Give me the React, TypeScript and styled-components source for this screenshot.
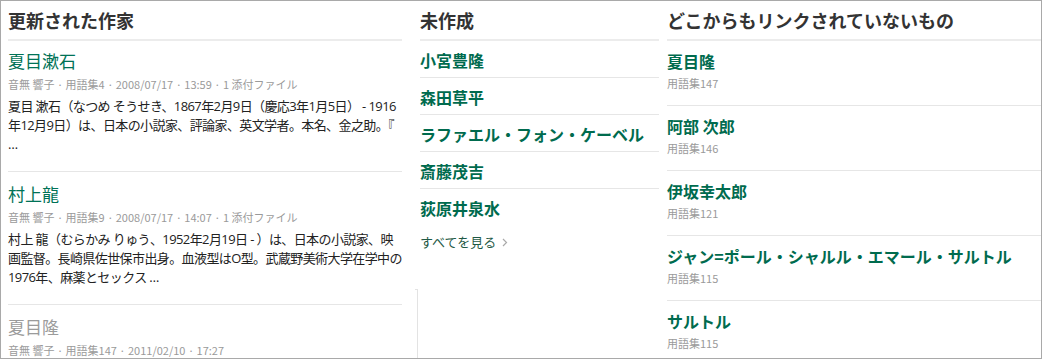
import React from "react";
import styled, { createGlobalStyle } from "styled-components";

type Update = {
  title: string;
  meta: string;
  body?: string;
  faded?: boolean;
};

type Orphan = {
  title: string;
  glossary: string;
};

const updates: Update[] = [
  {
    title: "夏目漱石",
    meta: "音無 響子 · 用語集4 · 2008/07/17 · 13:59 · 1 添付ファイル",
    body:
      "夏目 漱石（なつめ そうせき、1867年2月9日（慶応3年1月5日） - 1916年12月9日）は、日本の小説家、評論家、英文学者。本名、金之助。『 …",
  },
  {
    title: "村上龍",
    meta: "音無 響子 · 用語集9 · 2008/07/17 · 14:07 · 1 添付ファイル",
    body:
      "村上 龍（むらかみ りゅう、1952年2月19日 - ）は、日本の小説家、映画監督。長崎県佐世保市出身。血液型はO型。武蔵野美術大学在学中の1976年、麻薬とセックス …",
  },
  {
    title: "夏目隆",
    meta: "音無 響子 · 用語集147 · 2011/02/10 · 17:27",
    faded: true,
  },
];

const missing = ["小宮豊隆", "森田草平", "ラファエル・フォン・ケーベル", "斎藤茂吉", "荻原井泉水"];

const orphans: Orphan[] = [
  { title: "夏目隆", glossary: "用語集147" },
  { title: "阿部 次郎", glossary: "用語集146" },
  { title: "伊坂幸太郎", glossary: "用語集121" },
  { title: "ジャン=ポール・シャルル・エマール・サルトル", glossary: "用語集115" },
  { title: "サルトル", glossary: "用語集115" },
];

const GlobalStyle = createGlobalStyle`
  html, body {
    margin: 0;
    padding: 0;
    background: #fff;
  }
  body {
    font-family: "Noto Sans CJK JP", "Noto Sans", sans-serif;
    color: #222;
  }
`;

const Frame = styled.div`
  box-sizing: border-box;
  width: 1042px;
  height: 359px;
  overflow: hidden;
  border: 1px solid #a9a9a9;
  display: flex;
  align-items: stretch;
  padding-left: 7px;
`;

const Column = styled.section<{ $width?: number; $offset?: number }>`
  display: flex;
  flex-direction: column;
  min-width: 0;
  flex: ${(p) => (p.$width ? `0 0 ${p.$width}px` : "1 1 auto")};
  margin-left: ${(p) => p.$offset ?? 0}px;
`;

const Heading = styled.h2`
  margin: 0;
  padding-top: 6px;
  height: 40px;
  flex-shrink: 0;
  box-sizing: border-box;
  font-size: 18px;
  line-height: 26px;
  font-weight: 700;
  color: #333;
  border-bottom: 2px solid #ececec;
  white-space: nowrap;
`;

const UpdateItem = styled.article`
  padding: 8px 0 17px;
  border-bottom: 1px solid #e6e6e6;

  & + & {
    padding-top: 10px;
  }
`;

const UpdateTitle = styled.a<{ $faded?: boolean }>`
  display: block;
  font-size: 17px;
  line-height: 24px;
  font-weight: 400;
  color: ${(p) => (p.$faded ? "#9b9b9b" : "#007256")};
  text-decoration: none;
`;

const Meta = styled.div`
  margin-top: 3px;
  font-size: 11px;
  line-height: 16px;
  color: #9a9a9a;
  white-space: nowrap;
`;

const Body = styled.p`
  margin: 5px -3px 0 0;
  font-family: "Open Sans", "Noto Sans CJK JP", sans-serif;
  font-size: 13px;
  line-height: 19px;
  letter-spacing: -0.6px;
  color: #222;
`;

const MissingItem = styled.a<{ $last?: boolean }>`
  display: block;
  padding: 8px 0 6px;
  font-size: 16px;
  line-height: 22px;
  font-weight: 700;
  color: #006b4e;
  text-decoration: none;
  white-space: nowrap;
  border-bottom: ${(p) => (p.$last ? "none" : "1px solid #e6e6e6")};
`;

const SeeAll = styled.a`
  display: flex;
  align-items: center;
  gap: 6px;
  margin-top: 7px;
  font-size: 13px;
  line-height: 20px;
  color: #1f5a46;
  text-decoration: none;
`;

const Chevron = styled.svg`
  width: 6px;
  height: 9px;
  margin-top: 1px;
`;

const Trailing = styled.div`
  position: relative;
  flex: 1;
  margin-top: 37px;
  margin-left: -3px;
  border-left: 1px solid #e3e3e3;

  &::before {
    content: "";
    position: absolute;
    top: 0;
    left: -3px;
    width: 2px;
    height: 1px;
    background: #e3e3e3;
  }
`;

const OrphanItem = styled.article`
  padding: 9px 0 14px;
  border-bottom: 1px solid #e6e6e6;
`;

const OrphanTitle = styled.a`
  display: block;
  font-size: 16px;
  line-height: 22px;
  font-weight: 700;
  color: #006b4e;
  text-decoration: none;
  white-space: nowrap;
`;

export default function App() {
  return (
    <>
      <GlobalStyle />
      <Frame>
        <Column $width={394}>
          <Heading>更新された作家</Heading>
          {updates.map((u) => (
            <UpdateItem key={u.title + u.meta}>
              <UpdateTitle href="#" $faded={u.faded}>
                {u.title}
              </UpdateTitle>
              <Meta>{u.meta}</Meta>
              {u.body && <Body>{u.body}</Body>}
            </UpdateItem>
          ))}
        </Column>

        <Column $width={239} $offset={18}>
          <Heading>未作成</Heading>
          {missing.map((name, i) => (
            <MissingItem key={name} href="#" $last={i === missing.length - 1}>
              {name}
            </MissingItem>
          ))}
          <SeeAll href="#">
            すべてを見る
            <Chevron viewBox="0 0 6 9">
              <path d="M1 1l3.5 3.5L1 8" fill="none" stroke="#aaa" strokeWidth="1.2" />
            </Chevron>
          </SeeAll>
          <Trailing />
        </Column>

        <Column $offset={8}>
          <Heading>どこからもリンクされていないもの</Heading>
          {orphans.map((o) => (
            <OrphanItem key={o.title}>
              <OrphanTitle href="#">{o.title}</OrphanTitle>
              <Meta>{o.glossary}</Meta>
            </OrphanItem>
          ))}
        </Column>
      </Frame>
    </>
  );
}
